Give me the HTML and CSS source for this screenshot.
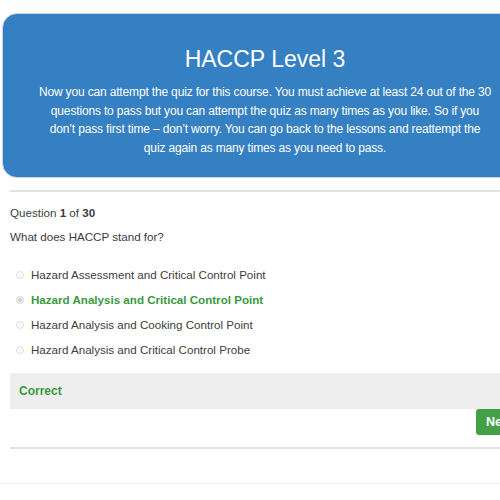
FILE: index.html
```html
<!DOCTYPE html>
<html lang="en">
<head>
    <meta charset="UTF-8">
    <meta name="viewport" content="width=device-width, initial-scale=1.0">
    <title>HACCP Level 3 Quiz</title>
    <link rel="stylesheet" href="styles.css">
</head>
<body>
    <div class="page">
        <div class="banner">
            <h1>HACCP Level 3</h1>
            <p class="intro">Now you can attempt the quiz for this course. You must achieve at least 24 out of the 30 questions to pass but you can attempt the quiz as many times as you like. So if you don&rsquo;t pass first time &ndash; don&rsquo;t worry. You can go back to the lessons and reattempt the quiz again as many times as you need to pass.</p>
        </div>

        <div class="quiz">
            <p class="counter">Question <strong>1</strong> of <strong>30</strong></p>
            <p class="question">What does HACCP stand for?</p>

            <ul class="answers">
                <li><span class="radio"></span>Hazard Assessment and Critical Control Point</li>
                <li class="correct"><span class="radio checked"></span>Hazard Analysis and Critical Control Point</li>
                <li><span class="radio"></span>Hazard Analysis and Cooking Control Point</li>
                <li><span class="radio"></span>Hazard Analysis and Critical Control Probe</li>
            </ul>

            <div class="feedback">Correct</div>

            <div class="actions">
                <button type="button" class="next">Next</button>
            </div>
        </div>

        <div class="footer"></div>
    </div>
</body>
</html>
```

FILE: styles.css
```css
html, body {
    overflow: hidden;
}
body {
    font-family: "Liberation Sans", Arial, sans-serif;
    margin: 0;
    padding: 0;
    background-color: #fff;
    color: #555;
}
.page {
    width: 528px;
}
.banner {
    box-sizing: border-box;
    width: 526px;
    margin: 13px 0 0 2px;
    padding: 33px 0 20px;
    background-color: #3580c3;
    border: 1px solid #c9d5e2;
    border-radius: 15px;
    text-align: center;
    color: #fff;
}
.banner h1 {
    font-size: 23px;
    font-weight: normal;
    line-height: 25px;
    margin: 0 0 11px;
}
.intro {
    width: 454px;
    margin: 0 auto;
    font-size: 12px;
    letter-spacing: -0.16px;
    line-height: 18.6px;
}
.quiz {
    margin: 12px 0 0 10px;
    padding-top: 12px;
    border-top: 2px solid #e2e2e2;
    border-bottom: 2px solid #e2e2e2;
    font-size: 11.6px;
}
.counter {
    margin: 0;
    line-height: 17px;
    color: #3d3d3d;
}
.question {
    margin: 7px 0 0;
    line-height: 17px;
    color: #3d3d3d;
}
.answers {
    list-style: none;
    margin: 17px 0 0;
    padding: 0;
}
.answers li {
    display: flex;
    align-items: center;
    height: 25px;
    color: #3d3d3d;
}
.answers li.correct {
    color: #3a9a3e;
    font-weight: bold;
}
.radio {
    box-sizing: border-box;
    width: 8px;
    height: 8px;
    margin: 0 7px 0 6px;
    border: 1px solid #e0e0e0;
    border-radius: 50%;
    background-color: #fafafa;
}
.radio.checked {
    background-color: #d2d2d2;
    border-color: #e0e0e0;
    box-shadow: inset 0 0 0 1px #f2f2f2;
}
.feedback {
    margin-top: 11px;
    padding: 0 9px;
    line-height: 36px;
    background-color: #eee;
    color: #3a9a3e;
    font-weight: bold;
    font-size: 12px;
}
.actions {
    display: flex;
    justify-content: flex-end;
    padding: 0 5px 12px 0;
}
.next {
    height: 26px;
    padding: 0 10px;
    border: none;
    border-radius: 3px;
    background-color: #43a047;
    color: #fff;
    font-family: inherit;
    font-size: 12.5px;
    font-weight: bold;
}
.footer {
    margin-top: 34px;
    border-top: 1px solid #eee;
}
```
